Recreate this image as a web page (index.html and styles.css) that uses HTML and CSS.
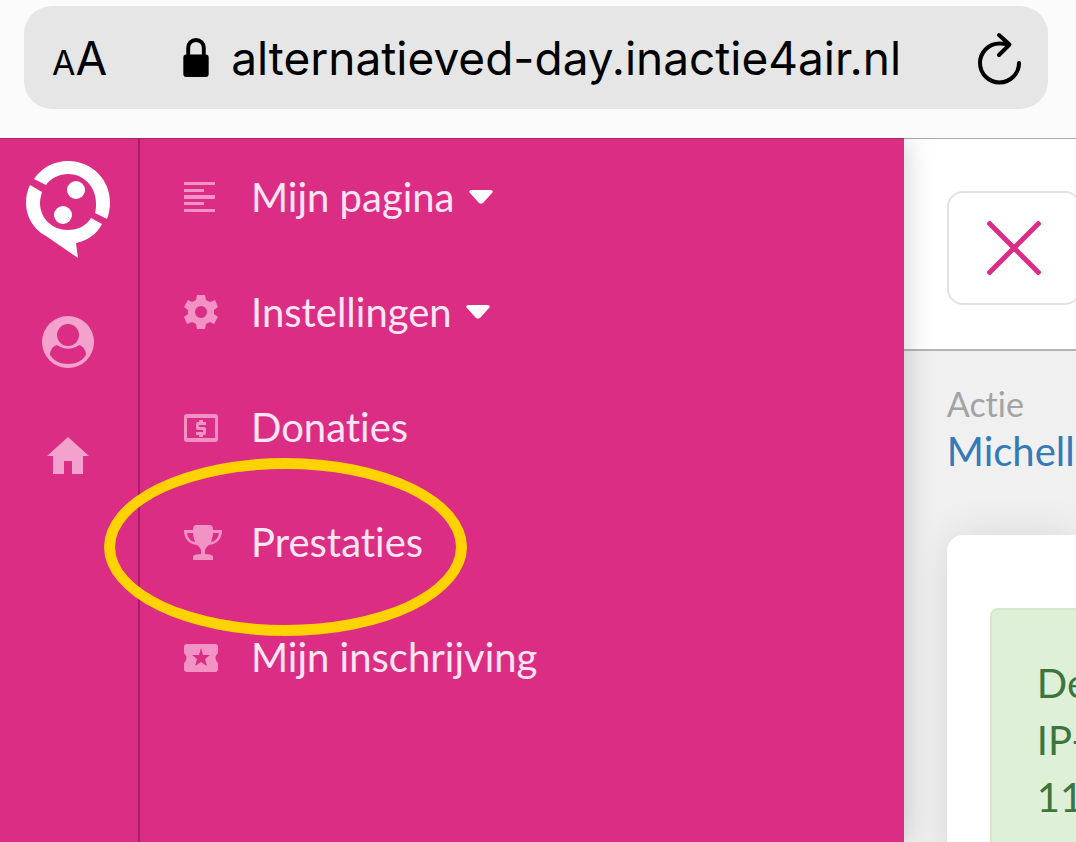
FILE: index.html
```
<!DOCTYPE html>
<html lang="nl">
<head>
  <meta charset="utf-8">
  <title>Mijn pagina</title>
  <link rel="stylesheet" href="styles.css">
</head>
<body>
  <header class="browser">
    <div class="address-bar">
      <button class="text-size" aria-label="Tekstgrootte"><small>A</small>A</button>
      <div class="url">
        <svg class="lock" viewBox="0 0 26 40" width="26" height="39">
          <path d="M5 19V10a8 8 0 0 1 16 0v9" fill="none" stroke="#000" stroke-width="4"/>
          <rect x="0" y="17" width="26" height="23" rx="3"/>
        </svg>
        <span>alternatieved-day.inactie4air.nl</span>
      </div>
      <button class="reload" aria-label="Vernieuwen">
        <svg viewBox="0 0 44 54" width="44" height="54" fill="none" stroke="#000" stroke-width="4" stroke-linecap="round" stroke-linejoin="round">
          <path d="M42 32a19.500 19.500 0 1 1-19.500-19.500c3 0 6 .3 9 1"/>
          <path d="M22 4l10.500 9.500L22 24"/>
        </svg>
      </button>
    </div>
  </header>

  <div class="app">
    <aside class="sidebar">
      <nav class="rail">
        <a href="#" class="logo" aria-label="Start">
          <svg viewBox="0 0 84 98" width="84" height="98">
            <path fill="#fff" d="M8 18C16 6 29 0 42 0c24 0 42 19 42 41 0 6-1 12-3 17l-12-6c1-3 1-7 1-10 0-16-12-29-28-29-9 0-17 4-22 11zM4 24l12 7c-1 4-2 7-2 11 0 15 12 27 28 27 10 0 18-4 23-12l11 6C71 73 61 80 50 82l2 15L20 75C8 69 0 56 0 42c0-6 1-12 4-18z"/>
            <circle cx="50" cy="29" r="9" fill="#fff"/>
            <circle cx="37" cy="54" r="9" fill="#fff"/>
          </svg>
        </a>
        <a href="#" class="profile" aria-label="Profiel">
          <svg viewBox="0 0 52 52" width="52" height="52">
            <circle cx="26" cy="26" r="26" fill="#f3a2cd"/>
            <path fill="#dc2d85" d="M15 29c7 5 15 5 22 0 4 1 7 5 7 10-4 6-10 9-18 9S12 45 8 39c0-5 3-9 7-10z"/>
            <circle cx="26" cy="19" r="13" fill="#f3a2cd"/>
            <circle cx="26" cy="19" r="11" fill="#dc2d85"/>
          </svg>
        </a>
        <a href="#" class="home" aria-label="Home">
          <svg viewBox="0 0 42 37" width="42" height="37" fill="#f3a2cd">
            <path d="M21 0l21 19h-6v18H25V24h-8v13H6V19H0z"/>
          </svg>
        </a>
      </nav>

      <nav class="menu">
        <button class="menu-item">
          <svg class="icon" viewBox="0 0 38 36" width="38" height="36">
            <path d="M0 3h31v3H0zM0 10h20v3H0zM0 16h31v4H0zM0 23h20v3H0zM0 30h31v3H0z"/>
          </svg>
          <span>Mijn pagina</span>
          <svg class="caret" viewBox="0 0 24 14" width="24" height="14"><path d="M2 0h20q3 1 1 3L14 13q-2 1-4 0L1 3q-2-2 1-3z"/></svg>
        </button>
        <button class="menu-item">
          <svg class="icon" viewBox="0 0 38 36" width="38" height="36">
            <path fill-rule="evenodd" d="M13 1h8l1 5 4 2 5-2 3 7-4 3v4l4 3-4 7-4-2-4 2-1 5h-8l-1-5-4-2-5 2-3-7 4-3v-4l-4-3 4-7 4 2 4-2zm4 11a6 6 0 1 0 0 12 6 6 0 0 0 0-12z"/>
          </svg>
          <span>Instellingen</span>
          <svg class="caret" viewBox="0 0 24 14" width="24" height="14"><path d="M2 0h20q3 1 1 3L14 13q-2 1-4 0L1 3q-2-2 1-3z"/></svg>
        </button>
        <a href="#" class="menu-item">
          <svg class="icon" viewBox="0 0 38 36" width="38" height="36">
            <path fill-rule="evenodd" d="M3 5h28q3 0 3 3v22q0 3-3 3H3q-3 0-3-3V8q0-3 3-3zm0 4v20h28V9z"/>
            <path d="M15 11h4v2h3v3h-7v2h5q2 0 2 2v4q0 2-2 2h-1v2h-4v-2h-3v-3h7v-2h-5q-2 0-2-2v-4q0-2 2-2h1z"/>
          </svg>
          <span>Donaties</span>
        </a>
        <a href="#" class="menu-item marked">
          <svg class="icon" viewBox="0 0 38 36" width="38" height="36">
            <path d="M12 1h14q3 0 3 5h9c0 9-5 14-13 15-2 2-4 3-4 6v3q6 0 8 2v4H9v-4q2-2 8-2v-3c0-3-2-4-4-6C5 20 0 15 0 6h9q0-5 3-5zM3 9c1 5 3 8 8 9-1-3-2-6-2-9zm26 0c0 3-1 6-2 9 5-1 7-4 8-9z"/>
          </svg>
          <span>Prestaties</span>
        </a>
        <a href="#" class="menu-item">
          <svg class="icon" viewBox="0 0 38 36" width="38" height="36">
            <path fill-rule="evenodd" d="M3 5h28q3 0 3 3v6q-5 5 0 10v6q0 3-3 3H3q-3 0-3-3v-6q5-5 0-10V8q0-3 3-3zm14 4l-2 7H8l5 4-2 7 6-4 6 4-2-7 5-4h-7z"/>
          </svg>
          <span>Mijn inschrijving</span>
        </a>
      </nav>
    </aside>

    <main class="content">
      <div class="topbar">
        <button class="close" aria-label="Menu sluiten">
          <svg viewBox="0 0 54 54" width="54" height="54" stroke="#dc2d85" stroke-width="5">
            <path d="M1 1l52 52M53 1L1 53"/>
          </svg>
        </button>
      </div>
      <div class="page">
        <div class="label">Actie</div>
        <a href="#" class="name">Michell</a>
        <section class="card">
          <div class="alert">De<br>IP-<br>11</div>
        </section>
      </div>
    </main>
  </div>
</body>
</html>
```
FILE: styles.css
```
*,
*::after {
  box-sizing: border-box;
}
body {
  margin: 0;
  height: 100vh;
  display: flex;
  flex-direction: column;
  overflow: hidden;
  font-family: "Lato", sans-serif;
  font-variant-ligatures: none;
  background: #fbfbfb;
}
button {
  border: none;
  background: none;
  padding: 0;
  font: inherit;
  font-variant-ligatures: none;
  color: inherit;
  cursor: pointer;
}
a {
  text-decoration: none;
}
svg {
  display: block;
  flex: none;
}

/* browser bar */
.browser {
  padding: 6px 28px 29px 24px;
}
.address-bar {
  display: flex;
  align-items: center;
  justify-content: space-between;
  height: 103px;
  padding: 0 27px 0 28px;
  border-radius: 28px;
  background: #e6e6e6;
  font-family: "Inter", sans-serif;
  color: #000;
}
.text-size {
  font-size: 46px;
}
.text-size small {
  font-size: 34px;
}
.url {
  display: flex;
  align-items: center;
  gap: 22px;
  font-size: 46px;
  white-space: nowrap;
}

/* layout */
.app {
  flex: 1;
  min-height: 0;
  display: flex;
  border-top: 1px solid #a8a8a8;
}
.sidebar {
  flex: 0 0 84%;
  display: flex;
  z-index: 1;
  margin-top: -1px;
  border-top: 1px solid #a02a68;
  background: #dc2d85;
  box-shadow: 0 0 28px rgba(0, 0, 0, 0.2);
  clip-path: inset(0 -40px 0 0);
}
.rail {
  flex: 0 0 140px;
  display: flex;
  flex-direction: column;
  align-items: center;
  padding: 22px 3px 0 0;
  border-right: 2px solid #ac1c64;
}
.profile {
  margin-top: 57px;
}
.home {
  margin-top: 69px;
}

/* menu */
.menu {
  flex: 1;
  display: flex;
  flex-direction: column;
}
.menu-item {
  position: relative;
  display: flex;
  align-items: center;
  height: 115px;
  padding-left: 44px;
  font-size: 40px;
  color: #fde6f2;
  white-space: nowrap;
}
.icon {
  margin-right: 29px;
  fill: #f292c5;
}
.caret {
  margin-left: 14px;
  fill: #fff;
}
.marked::after {
  content: "";
  position: absolute;
  left: -36px;
  top: -26px;
  width: 363px;
  height: 178px;
  border: 11px solid #ffd200;
  border-radius: 50%;
  z-index: 1;
  pointer-events: none;
}

/* page behind the menu */
.content {
  flex: 1;
  min-width: 0;
  display: flex;
  flex-direction: column;
  overflow: hidden;
  background: #f0f0f0;
}
.topbar {
  padding: 52px 0 44px 43px;
  background: #fff;
  border-bottom: 2px solid #b4b4b4;
}
.close {
  display: flex;
  align-items: center;
  justify-content: center;
  width: 134px;
  height: 114px;
  border: 2px solid #e2e2e2;
  border-radius: 16px;
}
.page {
  flex: 1;
  display: flex;
  flex-direction: column;
  padding: 30px 0 0 43px;
  white-space: nowrap;
}
.label {
  font-size: 34px;
  line-height: 46px;
  color: #a3a3a3;
}
.name {
  font-size: 40px;
  line-height: 48px;
  color: #337ab7;
}
.card {
  flex: 1;
  margin-top: 60px;
  padding: 73px 0 0 43px;
  border-radius: 16px 0 0 0;
  background: #fff;
  box-shadow: 0 0 40px rgba(0, 0, 0, 0.1);
}
.alert {
  height: 100%;
  padding: 45px;
  border: 2px solid #d6e9c6;
  border-radius: 8px 0 0 0;
  background: #dff0d8;
  color: #3c763d;
  font-size: 40px;
  line-height: 57px;
}
```
